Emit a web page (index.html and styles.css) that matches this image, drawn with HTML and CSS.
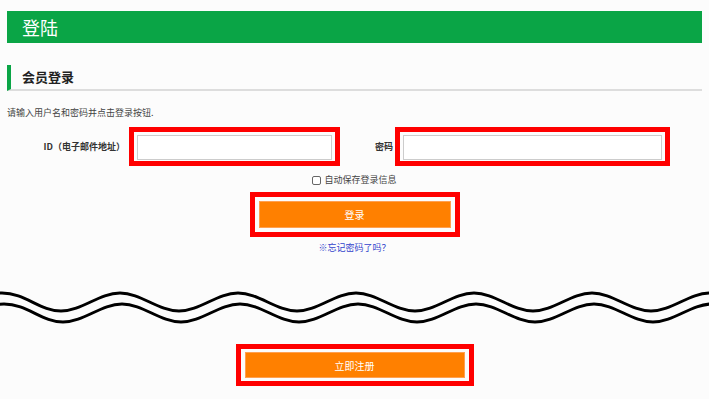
FILE: index.html
```html
<!DOCTYPE html>
<html lang="zh-CN">
<head>
    <meta charset="UTF-8">
    <meta name="viewport" content="width=device-width, initial-scale=1.0">
    <title>登陆</title>
    <link rel="stylesheet" href="styles.css">
</head>
<body>
    <div id="page">
        <h1 class="page-title">登陆</h1>
        <h2 class="sec-title">会员登录</h2>
        <p class="intro">请输入用户名和密码并点击登录按钮.</p>

        <div class="form-row">
            <label class="lbl lbl-id">ID（电子邮件地址）</label>
            <div class="mark mark-id"><input type="text" class="txt"></div>
            <label class="lbl lbl-pw">密码</label>
            <div class="mark mark-pw"><input type="password" class="txt"></div>
        </div>

        <div class="remember">
            <input type="checkbox" id="auto"><label for="auto">自动保存登录信息</label>
        </div>

        <div class="mark mark-btn"><button class="btn">登录</button></div>

        <p class="forgot"><a href="#">※忘记密码了吗？</a></p>

        <!-- 分割线 -->
        <svg class="wave" width="709" height="42" viewBox="0 0 709 42">
            <path d="M-57,25 C-36,25 -21,7 2,7 S40,25 61,25 S99,7 120,7 S158,25 179,25 S217,7 238,7 S276,25 297,25 S335,7 356,7 S394,25 415,25 S453,7 474,7 S512,25 533,25 S571,7 592,7 S630,25 651,25 S689,7 710,7 S748,25 769,25" />
            <path d="M-55,36 C-34,36 -19,18 4,18 S42,36 63,36 S101,18 122,18 S160,36 181,36 S219,18 240,18 S278,36 299,36 S337,18 358,18 S396,36 417,36 S455,18 476,18 S514,36 535,36 S573,18 594,18 S632,36 653,36 S691,18 712,18 S750,36 771,36" />
        </svg>

        <div class="mark mark-reg"><button class="btn">立即注册</button></div>
    </div>
</body>
</html>
```

FILE: styles.css
```css
*{
    margin: 0;
    padding: 0;
    box-sizing: border-box;
}
body{
    background: #fcfcfc;
    font-family: "Noto Sans CJK SC", "Liberation Sans", sans-serif;
    color: #333333;
    width: 709px;
    height: 399px;
    overflow: hidden;
}
#page{
    padding: 11px 7px 0;
    display: flex;
    flex-direction: column;
}
.page-title{
    height: 32px;
    background: #0aa546;
    color: #ffffff;
    font-size: 18px;
    font-weight: normal;
    line-height: 32px;
    padding-left: 15px;
}
.sec-title{
    margin-top: 22px;
    height: 26px;
    border-left: 4px solid #0aa546;
    border-bottom: 2px solid #dddddd;
    font-size: 13px;
    line-height: 23px;
    padding-left: 11px;
    color: #222222;
}
.intro{
    margin-top: 15px;
    font-size: 9px;
    line-height: 14px;
    color: #444444;
}
.form-row{
    margin-top: 7px;
    display: flex;
    align-items: center;
}
.lbl{
    font-size: 9px;
    font-weight: bold;
    color: #333333;
    text-align: right;
}
.lbl-id{
    width: 118px;
    margin-right: 4px;
}
.lbl-pw{
    width: 53px;
    margin-right: 2px;
}
/* 红色标记框 */
.mark{
    border: 5px solid #ff0000;
    padding: 3px;
}
.mark-id{
    width: 211px;
    height: 39px;
}
.mark-pw{
    width: 275px;
    height: 39px;
}
.txt{
    display: block;
    width: 100%;
    height: 25px;
    border: 1px solid #cccccc;
    background: #ffffff;
    outline: none;
}
.remember{
    margin-top: 7px;
    display: flex;
    justify-content: center;
    align-items: center;
    font-size: 9px;
    line-height: 14px;
    color: #444444;
}
.remember input{
    appearance: none;
    width: 9px;
    height: 9px;
    border: 1px solid #666666;
    border-radius: 2px;
    background: #ffffff;
    margin-right: 3px;
}
.mark-btn{
    margin: 5px auto 0;
    width: 210px;
    height: 45px;
    padding: 4px;
}
.btn{
    display: block;
    width: 100%;
    height: 100%;
    background: #ff8000;
    border: 1px solid #ffa050;
    color: #ffffff;
    font-family: inherit;
    font-size: 10px;
}
.forgot{
    margin-top: 4px;
    text-align: center;
    font-size: 9px;
    line-height: 14px;
}
.forgot a{
    color: #3344cc;
    text-decoration: none;
}
.wave{
    display: block;
    margin: 31px 0 0 -7px;
}
.wave path{
    fill: none;
    stroke: #000000;
    stroke-width: 3;
}
.mark-reg{
    margin: 16px auto 0;
    width: 238px;
    height: 42px;
    padding: 3px 4px;
}
```
